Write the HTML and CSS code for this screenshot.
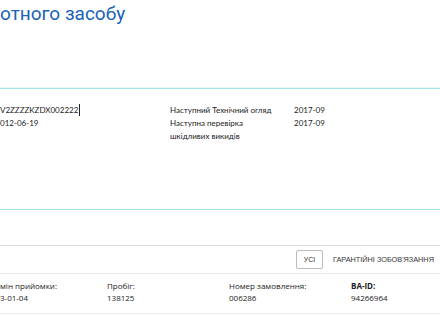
FILE: index.html
```html
<!DOCTYPE html>
<html lang="uk">
<head>
<meta charset="utf-8">
<link rel="stylesheet" href="styles.css">
</head>
<body>
<div class="page">
  <header class="head">
    <h1 class="title">отного засобу</h1>
  </header>
  <section class="details">
    <div class="col c1">
      <div class="ln">V2ZZZZKZDX002222<span class="caret"></span></div>
      <div class="ln">012-06-19</div>
    </div>
    <div class="col c2">
      <div class="ln">Наступний Технічний огляд</div>
      <div class="ln">Наступна перевірка</div>
      <div class="ln">шкідливих викидів</div>
    </div>
    <div class="col c3">
      <div class="ln">2017-09</div>
      <div class="ln">2017-09</div>
    </div>
  </section>
  <nav class="tabs">
    <button class="btn">УСІ</button>
    <span class="tab">ГАРАНТІЙНІ ЗОБОВ'ЯЗАННЯ</span>
  </nav>
  <section class="info">
    <div class="cell"><div class="lbl">мін прийомки:</div><div class="val">3-01-04</div></div>
    <div class="cell"><div class="lbl">Пробіг:</div><div class="val">138125</div></div>
    <div class="cell"><div class="lbl">Номер замовлення:</div><div class="val">006286</div></div>
    <div class="cell"><div class="lbl b">BA-ID:</div><div class="val">94266964</div></div>
  </section>
</div>
</body>
</html>
```
FILE: styles.css
```css
html, body { margin: 0; padding: 0; background: #fff; }
body { width: 440px; height: 316px; overflow: hidden; font-family: Lato, "Open Sans", sans-serif; color: #222; }
.page { width: 440px; }
.head { height: 87px; border-bottom: 1px solid #e6f7f8; }
.title { margin: 0; padding-top: 2px; font-family: Roboto, "Liberation Sans", sans-serif; font-weight: 400; font-size: 19px; line-height: 24px; color: #1a63b6; }
.details { display: flex; height: 122px; padding-top: 15px; box-sizing: border-box; border-top: 1px solid #a8e3e8; border-bottom: 1px solid #a8e3e8; }
.col { font-size: 8px; line-height: 13px; }
.c1 { width: 170px; }
.c2 { width: 124px; }
.caret { display: inline-block; width: 1px; height: 12px; background: #222; vertical-align: -3px; margin-left: 1px; }
.tabs { display: flex; align-items: center; height: 27px; margin-top: 35px; border-top: 1px solid #dcdcdc; border-bottom: 1px solid #e8e8e8; padding-left: 296px; }
.btn { width: 27px; height: 19px; padding: 0; border: 1px solid #bbb; border-radius: 2px; background: #fff; font-family: "Liberation Sans", sans-serif; font-size: 7px; color: #333; }
.tab { margin-left: 10px; font-family: "Liberation Sans", sans-serif; font-size: 7.3px; color: #333; }
.info { display: grid; grid-template-columns: 107px 122px 122px 1fr; padding: 6px 0 9px; border-bottom: 1px solid #eee; font-family: "Open Sans", sans-serif; font-size: 8px; line-height: 12px; }
.b { font-weight: 700; }
```
